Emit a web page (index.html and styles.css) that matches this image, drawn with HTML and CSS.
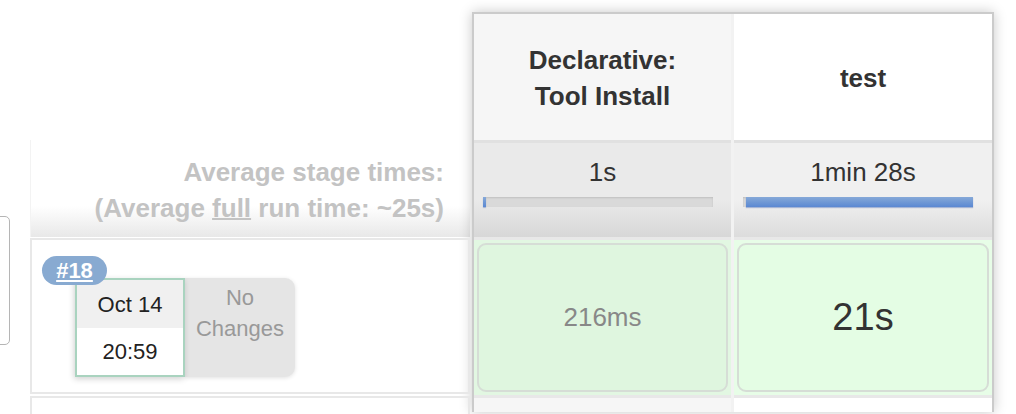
FILE: index.html
```html
<!DOCTYPE html>
<html>
<head>
<meta charset="utf-8">
<link rel="stylesheet" href="styles.css">
</head>
<body>
<div class="page">
  <div class="edge"><div class="cutbox"></div></div>
  <div class="left">
    <div class="left-head"></div>
    <div class="avg-label">Average stage times:<br>(Average <span class="ul">full</span> run time: ~25s)</div>
    <div class="build-row">
      <span class="badge">#18</span>
      <div class="build-info">
        <div class="date-card">
          <div class="date-top">Oct 14</div>
          <div class="date-bottom">20:59</div>
        </div>
        <div class="changes">No<br>Changes</div>
      </div>
    </div>
    <div class="build-row next"></div>
  </div>
  <div class="stages">
    <div class="head odd">Declarative:<br>Tool Install</div>
    <div class="head">test</div>
    <div class="avg odd">
      <div class="avg-time">1s</div>
      <div class="bar"><div class="fill" style="width:3px"></div></div>
    </div>
    <div class="avg">
      <div class="avg-time">1min 28s</div>
      <div class="bar"><div class="fill offset" style="width:227px"></div></div>
    </div>
    <div class="cell odd"><div class="card quick">216ms</div></div>
    <div class="cell"><div class="card big">21s</div></div>
    <div class="cell next odd"></div>
    <div class="cell next"></div>
  </div>
</div>
</body>
</html>
```

FILE: styles.css
```css
html, body {
  margin: 0;
  padding: 0;
  background: #fff;
  overflow: hidden;
}
body {
  font-family: "Liberation Sans", Arial, sans-serif;
  color: #333;
  width: 1016px;
  height: 414px;
}
.page {
  display: flex;
  align-items: flex-start;
  height: 414px;
  overflow: hidden;
}
.edge {
  width: 30px;
  flex: none;
  padding-top: 216px;
}
.cutbox {
  width: 30px;
  height: 129px;
  margin-left: -20px;
  border: 1px solid #b5b5b5;
  border-radius: 5px;
  box-sizing: border-box;
}
.left {
  width: 440px;
  flex: none;
}
.left-head {
  height: 140px;
}
.avg-label {
  height: 97px;
  box-sizing: border-box;
  padding: 14px 26px 0 0;
  text-align: right;
  font-weight: bold;
  font-size: 26px;
  line-height: 36px;
  color: #c3c3c3;
  border-left: 1px solid #f3f3f3;
  background: linear-gradient(#fff 0%, #fff 68%, #e8e8e8 100%);
}
.ul {
  text-decoration: underline;
  text-decoration-thickness: 2px;
}
.build-row {
  position: relative;
  margin-top: 1px;
  height: 156px;
  box-sizing: border-box;
  border: 2px solid #e8e8e8;
  padding: 38px 0 0 43px;
}
.build-row.next {
  margin-top: 2px;
  height: 18px;
  border-bottom: none;
}
.badge {
  position: absolute;
  left: 10px;
  top: 16px;
  z-index: 2;
  width: 65px;
  height: 29px;
  border-radius: 15px;
  background: #88aad1;
  color: #fff;
  font-weight: bold;
  font-size: 22px;
  line-height: 29px;
  text-align: center;
  text-decoration: underline;
  text-decoration-thickness: 2px;
  text-underline-offset: 2px;
}
.build-info {
  display: flex;
}
.date-card {
  width: 110px;
  height: 99px;
  box-sizing: border-box;
  border: 2px solid #a9d3bf;
  box-shadow: -1px 2px 6px rgba(0,0,0,0.18);
  display: flex;
  flex-direction: column;
  font-size: 22px;
  color: #222;
  position: relative;
  z-index: 1;
}
.date-top, .date-bottom {
  flex: 1;
  display: flex;
  align-items: center;
  justify-content: center;
}
.date-top {
  background: #f0f0f0;
  padding-top: 1px;
}
.date-bottom {
  background: #fff;
}
.changes {
  width: 110px;
  height: 99px;
  box-sizing: border-box;
  background: #e5e5e5;
  border-radius: 0 10px 10px 0;
  box-shadow: 0 1px 4px rgba(0,0,0,0.12);
  color: #999;
  font-size: 22px;
  line-height: 31px;
  text-align: center;
  padding-top: 4px;
}
.stages {
  flex: none;
  margin: 12px 0 0 2px;
  display: grid;
  grid-template-columns: 257px 258px;
  column-gap: 3px;
  background: #f2f2f2;
  border: 2px solid #cbcbcb;
  border-bottom: none;
  box-shadow: 0 0 12px rgba(0,0,0,0.22);
}
.head {
  height: 126px;
  display: flex;
  align-items: center;
  justify-content: center;
  text-align: center;
  font-weight: bold;
  font-size: 26px;
  line-height: 36px;
  color: #333;
  background: #fff;
  padding-top: 2px;
  box-sizing: border-box;
}
.head.odd {
  background: #f6f6f6;
}
.avg {
  height: 97px;
  box-sizing: border-box;
  border-top: 3px solid #e1e1e1;
  padding: 14px 0 0 9px;
  background: linear-gradient(#f0f0f0 0%, #f0f0f0 60%, #dcdcdc 100%);
}
.avg.odd {
  background: linear-gradient(#eaeaea 0%, #eaeaea 60%, #d7d7d7 100%);
}
.avg-time {
  font-size: 26px;
  line-height: 30px;
  text-align: center;
  padding-right: 9px;
  color: #333;
}
.bar {
  margin-top: 10px;
  width: 230px;
  height: 10px;
  background: #d9d9d9;
  box-shadow: inset 0 1px 2px rgba(0,0,0,0.12);
  display: flex;
}
.fill {
  height: 100%;
  background: linear-gradient(#86a9d8, #5a88d2);
  box-shadow: 0 1px 1px rgba(60,100,180,0.4);
}
.fill.offset {
  margin-left: 3px;
}
.cell {
  height: 158px;
  box-sizing: border-box;
  border-top: 3px solid #e8e8e8;
  padding: 3px;
  background: #e7fde7;
}
.cell.odd {
  background: #e2f7e2;
}
.cell.next {
  height: 17px;
  background: #fff;
}
.cell.next.odd {
  background: #f6f6f6;
}
.card {
  height: 149px;
  box-sizing: border-box;
  border: 2px solid #d6ddd6;
  border-radius: 9px;
  background: #e4fde4;
  display: flex;
  align-items: center;
  justify-content: center;
}
.card.quick {
  background: #dff6df;
  color: #888;
  font-size: 26px;
}
.card.big {
  font-size: 38px;
  color: #333;
}
```
